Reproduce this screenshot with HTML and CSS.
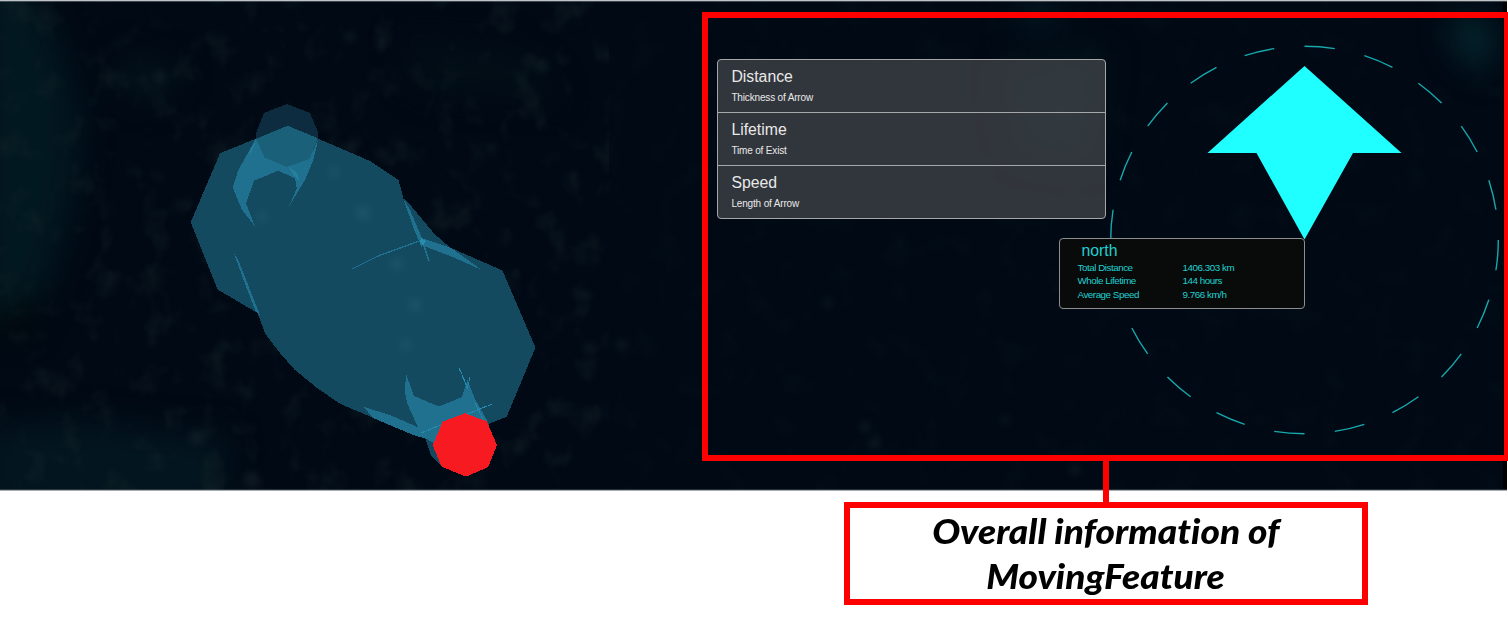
FILE: index.html
```html
<!DOCTYPE html>
<html lang="en">
<head>
<meta charset="utf-8">
<title>Overall information of MovingFeature</title>
<link rel="stylesheet" href="styles.css">
</head>
<body>
<main class="figure">
  <section class="map">
    <svg class="terrain" width="1508" height="491" viewBox="0 0 1508 491">
      <defs>
        <filter id="soft" x="-50%" y="-50%" width="200%" height="200%" color-interpolation-filters="sRGB"><feGaussianBlur stdDeviation="16"/></filter>
        <filter id="spot" x="-100%" y="-100%" width="300%" height="300%" color-interpolation-filters="sRGB"><feGaussianBlur stdDeviation="4"/></filter>
        <filter id="grain" x="0" y="0" width="100%" height="100%" color-interpolation-filters="sRGB">
          <feTurbulence type="fractalNoise" baseFrequency="0.035 0.03" numOctaves="3" seed="8"/>
          <feColorMatrix values="0 0 0 0 .11  0 0 0 0 .17  0 0 0 0 .18  2 0 0 0 -1.02"/>
        </filter>
        <clipPath id="tiles"><rect y="1" width="1507" height="489"/></clipPath>
      </defs>
      <g clip-path="url(#tiles)">
        <rect width="1508" height="491" fill="#000914"/>
        <g filter="url(#soft)">
          <path d="M-20 -20H25L60 50L80 120L70 210L45 290L10 320H-20Z" fill="#021820"/>
          <path d="M-20 430L60 420L150 430L230 440L220 510H-20Z" fill="#03161f"/>
          <path d="M120 55L180 70L165 100L120 90Z" fill="#04131b"/>
          <path d="M400 40L520 50L560 100L420 90Z" fill="#020e17"/>
          <path d="M0 315L35 300L30 325L0 335Z" fill="#010604"/>
          <path d="M1015 0H1065L1055 30H1020Z" fill="#021821"/>
          <path d="M1450 15L1495 25L1485 75L1455 45Z" fill="#052a32"/>
          <path d="M1005 70L1105 50L1090 160L1020 150Z" fill="#04161d"/>
        </g>
        <rect width="609" height="491" filter="url(#grain)" opacity=".5"/>
        <rect x="609" width="899" height="491" filter="url(#grain)" opacity=".16"/>
        <g filter="url(#spot)" fill="#26393d" opacity=".4">
          <path d="M24 295L34 280L30 292Z"/><path d="M50 242L62 222L56 240Z"/>
          <circle cx="160" cy="77" r="6"/><circle cx="197" cy="437" r="7"/><circle cx="252" cy="480" r="8"/>
          <circle cx="590" cy="348" r="5"/><circle cx="542" cy="66" r="6"/><circle cx="350" cy="37" r="5"/>
          <circle cx="875" cy="443" r="5"/><circle cx="865" cy="427" r="5"/><circle cx="622" cy="345" r="5"/>
          <circle cx="1075" cy="470" r="5"/><circle cx="1005" cy="420" r="4"/><circle cx="828" cy="303" r="4"/>
        </g>
        <rect x="1503" y="1" width="4" height="489" fill="#000"/>
      </g>
      <path d="M0 1H1507M0 490.2H1507" stroke="#7e878d" stroke-width="1"/>
      <g shape-rendering="crispEdges">
        <path fill="#0d2c3f" d="M287 104L264 113L256 133V140L288 167L317 145L318.5 133L310 113Z"/>
        <path fill="#144a60" d="M287.7 125.7L220 153.3L190.7 222.3L217.7 289.5L257.5 313L265.4 334L280 353L294.5 369.5L317 388L340.5 404L412.5 434.5L425 438L431 455L443 468L490 423.5L506.7 416.7L535.5 347.5L502.5 270.5L450 247.5L434.5 234L412 207L403.5 198.5L398.5 180L370 161Z"/>
        <path fill="#1b6079" d="M287.7 125.7L256 139L264.5 157.5L287 167L310 159L317.5 138Z"/>
        <path fill="#20718f" d="M256 138.5L238.3 170L232.7 187.3L241.7 209.3L255 226.5L246 203.3L254 180.7L278.3 170.7L295 178.3L296.7 188.3L289.3 206L305 180L313.3 160L318.3 139L309.5 159L287 167L264.5 157.5Z"/>
        <path fill="#2580a1" d="M257 139L250 155L251 148ZM289 167L297 173L299 180L294 176Z"/>
        <path fill="#20718f" d="M233 251L239 262L260 315L256 312L247 289Z"/>
        <path fill="#20718f" d="M422 238L451 248L482 270L455 258L424 246Z"/>
        <path fill="#20718f" d="M403 198L410 210L422 238V248L415 232Z"/>
        <path d="M352 269L378 256L422 240M422 240L429 261" fill="none" stroke="#20718f" stroke-width="1.3"/>
        <path fill="#268db1" d="M421 238L426 241L423 246L420 242Z"/>
        <path fill="#20718f" d="M406.5 375L414 396L439 406.5L462 397L467.5 380L475 399L488 422L435 444L422 436L407 403L404.5 390Z"/>
        <path fill="#20718f" d="M364 407L390 415L422 429L433 441L412 434.5L373 418Z"/>
        <path d="M459 368L468 389M470 377L467 389M421 433L492 404M475 403L484 421" fill="none" stroke="#268db1" stroke-width="1.1" stroke-dasharray="2 .4"/>
        <path fill="#f71a20" d="M465 413.3L486.7 421.3L497 445L488.3 467L466 476.7L441.7 466.7L432.7 445.3L442.7 421.7Z"/>
      </g>
      <g filter="url(#spot)" fill="#49808c" opacity=".2">
        <circle cx="363" cy="213" r="7"/><circle cx="334" cy="172" r="5"/><circle cx="262" cy="217" r="5"/>
        <circle cx="415" cy="305" r="6"/><circle cx="397" cy="264" r="6"/><circle cx="406" cy="345" r="5"/>
      </g>
    </svg>

    <div class="frame">
      <ul class="legend">
        <li class="legend-item"><strong class="legend-title">Distance</strong><span class="legend-note">Thickness of Arrow</span></li>
        <li class="legend-item"><strong class="legend-title">Lifetime</strong><span class="legend-note">Time of Exist</span></li>
        <li class="legend-item"><strong class="legend-title">Speed</strong><span class="legend-note">Length of Arrow</span></li>
      </ul>
    </div>

    <svg class="compass" width="400" height="400" viewBox="0 0 400 400">
      <circle class="ring" cx="199.5" cy="200" r="193.8" pathLength="40" transform="rotate(-90 199.5 200)"/>
      <path class="arrow" d="M199.5 25.9L296.5 113H248L199.5 199.5L151.5 113H102.5Z"/>
    </svg>

    <div class="tooltip">
      <h2 class="tooltip-title">north</h2>
      <dl class="stats">
        <dt>Total Distance</dt><dd>1406.303 km</dd>
        <dt>Whole Lifetime</dt><dd>144 hours</dd>
        <dt>Average Speed</dt><dd>9.766 km/h</dd>
      </dl>
    </div>
    <div class="connector"></div>
  </section>
  <p class="caption"><span class="caption-line">Overall information of</span><span class="caption-line">MovingFeature</span></p>
</main>
</body>
</html>
```

FILE: styles.css
```css
* { box-sizing: border-box; }
body {
  margin: 0;
  background: #fff;
  font-family: "Liberation Sans", Arial, sans-serif;
}
.figure {
  width: 1508px;
  height: 620px;
  overflow: hidden;
}
.map {
  position: relative;
  height: 502.4px;
  padding: 12.4px 0 0 702px;
}
.terrain {
  position: absolute;
  top: 0;
  left: 0;
}
.frame {
  position: relative;
  width: 808px;
  height: 449px;
  padding: 40.4px 9.4px;
  border: 6px solid #f00;
}
.legend {
  width: 389px;
  height: 160.6px;
  margin: 0;
  padding: 0;
  list-style: none;
  display: grid;
  grid-template-rows: 52.6px 53px 53px;
  border: 1px solid #a5a7a9;
  border-radius: 4px;
  background: rgba(70, 73, 77, .7);
  color: #e9e9e9;
}
.legend-item {
  display: flex;
  flex-direction: column;
  gap: 5px;
  padding: 7px 13px 0;
}
.legend-item + .legend-item { border-top: 1px solid #a5a7a9; }
.legend-title {
  font-size: 15.8px;
  font-weight: 400;
  line-height: 20px;
}
.legend-note {
  font-size: 10px;
  letter-spacing: -.16px;
  line-height: 12px;
}
.compass {
  position: absolute;
  left: 1105px;
  top: 40px;
}
.ring {
  fill: none;
  stroke: #16a9ae;
  stroke-width: 1.4;
  stroke-dasharray: 1 1;
}
.arrow { fill: #20ffff; }
.tooltip {
  position: absolute;
  left: 1059px;
  top: 237.5px;
  width: 246px;
  height: 71px;
  padding: 3px 17.5px;
  border: 1.5px solid #8d8e90;
  border-radius: 4px;
  background: #090a0a;
  color: #20d0d0;
}
.tooltip-title {
  margin: 0 0 1.6px 4px;
  font-size: 15.8px;
  font-weight: 400;
  line-height: 18px;
}
.stats {
  margin: 0;
  display: grid;
  grid-template-columns: 105px 1fr;
  font-size: 9.8px;
  letter-spacing: -.46px;
  line-height: 13.2px;
}
.stats dd { margin: 0; }
.connector {
  position: absolute;
  left: 1103px;
  top: 460px;
  width: 6px;
  height: 44px;
  background: #f00;
}
.caption {
  display: flex;
  flex-direction: column;
  align-items: center;
  width: 524px;
  height: 103px;
  margin: 0 0 0 844px;
  padding: 0;
  border: 6px solid #f00;
  color: #000;
  font: italic 900 35px/45px Lato, sans-serif;
  font-variant-ligatures: none;
}
.caption-line {
  white-space: nowrap;
  transform: scaleX(1.06);
}
```
